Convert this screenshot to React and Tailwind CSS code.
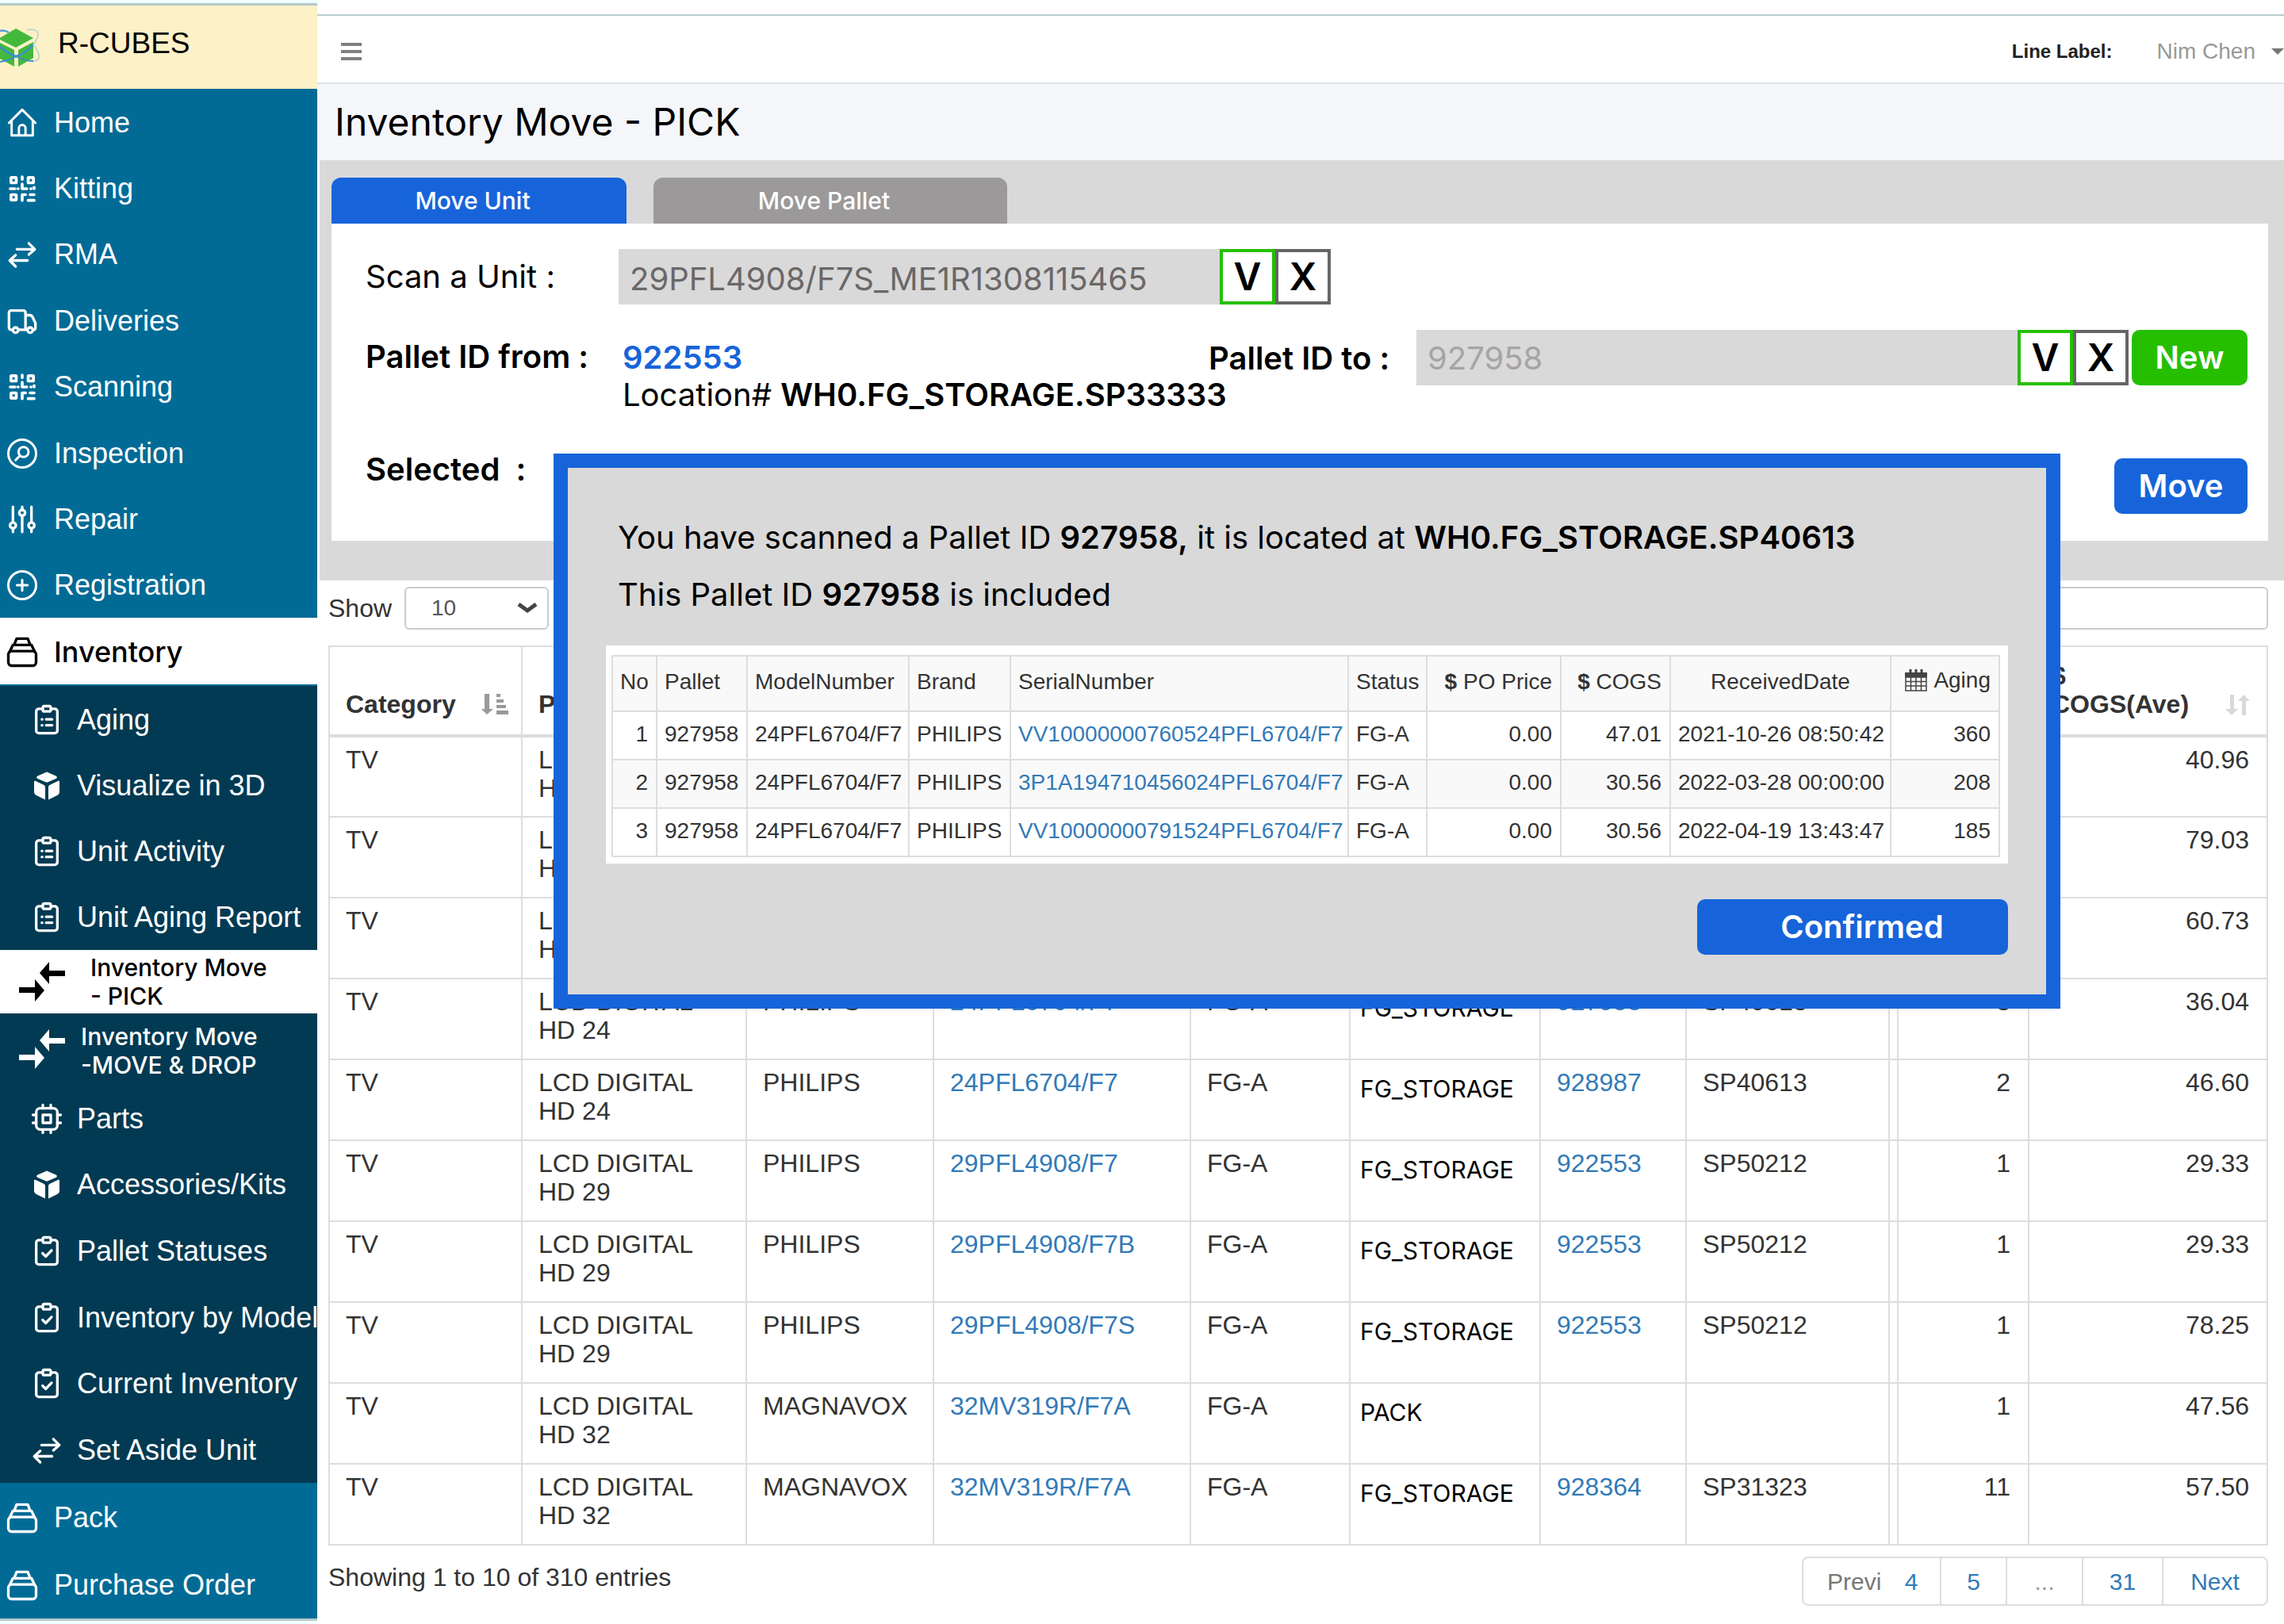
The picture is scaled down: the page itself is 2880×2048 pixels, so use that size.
import React from "react";

const SANS = "font-['Liberation_Sans',Arial,sans-serif]";
const INTER = "font-['Inter',sans-serif]";

function Svg({ children, size = "size-10", width = 2 }) {
  return (
    <svg
      viewBox="0 0 24 24"
      className={size}
      fill="none"
      stroke="currentColor"
      strokeWidth={width}
      strokeLinecap="round"
      strokeLinejoin="round"
      aria-hidden="true"
    >
      {children}
    </svg>
  );
}

const icons = {
  home: (
    <Svg width={1.8}>
      <path d="M2 12 12 2l10 10M4 10.500v11h16v-11M9.500 21.500v-5.500a2.500 2.500 0 0 1 5 0v5.500" />
    </Svg>
  ),
  qr: (
    <Svg width={2.2}>
      <rect x="3.500" y="3.500" width="4" height="4" rx="0.500" />
      <rect x="16.500" y="3.500" width="4" height="4" rx="0.500" />
      <rect x="3.500" y="16.500" width="4" height="4" rx="0.500" />
      <path d="M12 3v2M3 12h3.500M8.800 12h.2M12 8.500V12h3.500M18.500 12h.2M21 11v1M12 20.800v-4.300h2.500M18 16.500h3M16.500 20.800h4.500" />
    </Svg>
  ),
  transfer: (
    <Svg width={2}>
      <path d="M8 8h13M17 3.500 21.500 8 17 12M16 16.500H3M7 12.500 2.500 16.500 7 21" />
    </Svg>
  ),
  truck: (
    <Svg width={2}>
      <path d="M5 18.500H3.500A1.500 1.500 0 0 1 2 17V5.500A1.500 1.500 0 0 1 3.500 4H13a1.500 1.500 0 0 1 1.500 1.500V18.500H9.500M14.500 7.500h3.200c1 0 1.700.5 2.200 1.500l2.100 4.500v3.500a1.500 1.500 0 0 1-1 1.500" />
      <circle cx="7" cy="18.800" r="2" />
      <circle cx="18" cy="18.800" r="2" />
    </Svg>
  ),
  inspect: (
    <Svg width={1.8}>
      <circle cx="12" cy="12" r="10.500" />
      <circle cx="13" cy="10.800" r="3.800" />
      <path d="m10.200 13.600-3.200 3.400" />
    </Svg>
  ),
  sliders: (
    <Svg width={2}>
      <path d="M5 2.500V14M5 19v2.500M12 2.500v2M12 9v12.500M19 2.500V14M19 19v2.500" />
      <circle cx="5" cy="16.500" r="2.200" />
      <circle cx="12" cy="7" r="2.200" />
      <circle cx="19" cy="16.500" r="2.200" />
    </Svg>
  ),
  plus: (
    <Svg width={1.8}>
      <circle cx="12" cy="12" r="10.500" />
      <path d="M12 8v8M8 12h8" />
    </Svg>
  ),
  stack: (
    <Svg width={2}>
      <rect x="1.500" y="11.500" width="21" height="11" rx="2.500" />
      <path d="M2.500 12 5 6.800h14l2.500 5.200M6 6.500l1.800-4.500h8.400L18 6.500" />
    </Svg>
  ),
  clipboard: (
    <Svg width={2}>
      <path d="M8.500 3.500H6a2 2 0 0 0-2 2V20a2 2 0 0 0 2 2h12a2 2 0 0 0 2-2V5.500a2 2 0 0 0-2-2h-2.500" />
      <rect x="9" y="1.500" width="6" height="4" rx="1.200" />
      <path d="M8.300 11.500h.2M11.500 11.500h4.500M8.300 16h.2M11.500 16h4.500" />
    </Svg>
  ),
  clipcheck: (
    <Svg width={2}>
      <path d="M8.500 3.500H6a2 2 0 0 0-2 2V20a2 2 0 0 0 2 2h12a2 2 0 0 0 2-2V5.500a2 2 0 0 0-2-2h-2.500" />
      <rect x="9" y="1.500" width="6" height="4" rx="1.200" />
      <path d="m8.800 13.500 2.400 2.400 4.400-4.600" />
    </Svg>
  ),
  cube: (
    <svg viewBox="0 0 24 24" className="size-10" fill="currentColor" aria-hidden="true">
      <path d="M12 1.500 19.200 4.600c.7.400.7 1.400 0 1.800L12.900 9.200a2.200 2.200 0 0 1-1.800 0L4.800 6.400c-.7-.4-.7-1.400 0-1.800z" />
      <path d="M3.300 8.300 9.600 11.200c.7.300 1.200 1 1.200 1.800v9.500l-7-3.500a2.300 2.300 0 0 1-1.400-2V9c0-.7.400-1 .9-.7z" />
      <path d="M20.700 8.300 14.400 11.200c-.7.300-1.200 1-1.200 1.800v9.500l7-3.500a2.300 2.300 0 0 0 1.400-2V9c0-.7-.4-1-.9-.7z" />
    </svg>
  ),
  chip: (
    <Svg width={2}>
      <rect x="4" y="4" width="16" height="16" rx="3" />
      <rect x="9" y="9" width="6" height="6" />
      <path d="M9 1.500V4M15 1.500V4M9 20v2.500M15 20v2.500M1.500 9H4M1.500 15H4M20 9h2.500M20 15h2.500" />
    </Svg>
  ),
};

function MoveIcon() {
  return (
    <svg viewBox="0 0 58 50" className="h-[50px] w-[58px] shrink-0" fill="currentColor" aria-hidden="true">
      <path d="M26 14 38 0v11h20v7H38v10zM32 36 20 22v10H0v7h20v11z" />
    </svg>
  );
}

function NavItem({ icon, label, sub, active }) {
  return (
    <a
      href="#"
      className={
        "flex min-h-20 items-center whitespace-nowrap pt-0.5 text-4xl " +
        (sub ? "gap-[18px] pl-[39px] " : "gap-5 pl-2 ") +
        (active ? "bg-white font-['Inter',sans-serif] font-medium text-black" : "text-white")
      }
    >
      <span className="shrink-0">{icons[icon]}</span>
      {label}
    </a>
  );
}

const topNav = [
  ["home", "Home"],
  ["qr", "Kitting"],
  ["transfer", "RMA"],
  ["truck", "Deliveries"],
  ["qr", "Scanning"],
  ["inspect", "Inspection"],
  ["sliders", "Repair"],
  ["plus", "Registration"],
];
const subNavA = [
  ["clipboard", "Aging"],
  ["cube", "Visualize in 3D"],
  ["clipboard", "Unit Activity"],
  ["clipboard", "Unit Aging Report"],
];
const subNavB = [
  ["chip", "Parts"],
  ["cube", "Accessories/Kits"],
  ["clipcheck", "Pallet Statuses"],
  ["clipcheck", "Inventory by Model"],
  ["clipcheck", "Current Inventory"],
  ["transfer", "Set Aside Unit"],
];

function Logo() {
  return (
    <svg viewBox="0 0 52 52" className="size-[52px]" aria-hidden="true">
      <path d="M20 1 42 13 20 25-2 14z" fill="#43b93c" />
      <path d="M-2 18 18 28v21L-2 38zM42 18 23 28v21l19-11z" fill="#43b93c" />
      <path d="M0 24c8 7 14 10 20 12 8-2 16-8 22-15" fill="none" stroke="#3c8ccf" strokeWidth="2.500" />
      <path d="M20 36c7 4 14 6 22 6M20 36C14 40 6 42 0 43" fill="none" stroke="#3c8ccf" strokeWidth="2" />
      <path d="M0 4c4-1 8 0 11 2" fill="none" stroke="#5a9bd6" strokeWidth="2.500" />
      <path d="M34 3c8-2 14 0 14 5 0 4-2 8-6 13 5 6 8 12 7 17-1 3-4 4-7 4" fill="none" stroke="#b5cfcf" strokeWidth="1.500" />
    </svg>
  );
}

function Sidebar() {
  return (
    <aside className={"flex w-[400px] shrink-0 flex-col overflow-hidden bg-[#016b96] " + SANS}>
      <div className="h-1 bg-[#f0ffff]" />
      <div className="flex h-[108px] items-start gap-[21px] border-t-[3px] border-[#b5c9ca] bg-[#fdf1c7] pt-7">
        <Logo />
        <span className="text-[37px] leading-10 text-black">R-CUBES</span>
      </div>
      <nav>
        <div className="grid h-[667px] auto-rows-fr">
          {topNav.map(([i, l]) => (
            <NavItem key={l} icon={i} label={l} />
          ))}
        </div>
        <div className="grid h-[84px]">
          <NavItem icon="stack" label="Inventory" active />
        </div>
        <div className="grid h-[335px] auto-rows-fr border-t-2 border-[#016b96] bg-[#023a53]">
          {subNavA.map(([i, l]) => (
            <NavItem key={l} icon={i} label={l} sub />
          ))}
        </div>
        <a href="#" className={"flex h-20 items-center gap-8 bg-white pl-6 text-[30px] font-medium leading-9 text-black " + INTER}>
          <MoveIcon />
          <span>
            Inventory Move
            <br />- PICK
          </span>
        </a>
        <a href="#" className={"flex h-[90px] items-center gap-5 bg-[#023a53] pl-6 text-[30px] font-medium leading-9 text-white " + INTER}>
          <MoveIcon />
          <span className="pt-1">
            Inventory Move
            <br />
            -MOVE &amp; DROP
          </span>
        </a>
        <div className="grid h-[502px] auto-rows-fr bg-[#023a53]">
          {subNavB.map(([i, l]) => (
            <NavItem key={l} icon={i} label={l} sub />
          ))}
        </div>
        <div className="grid h-[171px] auto-rows-fr">
          <NavItem icon="stack" label="Pack" />
          <NavItem icon="stack" label="Purchase Order" />
        </div>
      </nav>
      <div className="flex-1 border-t-[3px] border-[#b5c9ca] bg-[#f0ffff]" />
    </aside>
  );
}

function TopBar() {
  return (
    <header className={"mt-[18px] flex h-[88px] items-center border-y-2 border-t-[#b8cdce] border-b-[#dfe3e7] pt-1.5 pl-[30px] " + SANS}>
      <button type="button" aria-label="Toggle menu" className="flex w-[26px] flex-col gap-[5px]">
        <span className="h-1 bg-[#808080]" />
        <span className="h-1 bg-[#808080]" />
        <span className="h-1 bg-[#808080]" />
      </button>
      <span className="ml-auto text-2xl font-bold text-[#222]">Line Label:</span>
      <button type="button" className="ml-14 flex items-center gap-5 text-[28px] text-[#999]">
        Nim Chen
        <svg viewBox="0 0 16 8" className="h-2 w-4" fill="#777" aria-hidden="true">
          <path d="M0 0h16L8 8z" />
        </svg>
      </button>
    </header>
  );
}

function Check({ kind }) {
  return (
    <button
      type="button"
      className={
        "flex size-[70px] shrink-0 items-center justify-center border-4 bg-white text-5xl font-semibold text-black " +
        (kind === "V" ? "border-[#26bf00]" : "border-[#666]")
      }
    >
      {kind}
    </button>
  );
}

function MovePanel() {
  return (
    <section className={"ml-[3px] bg-[#d9d9d9] pt-[22px] pr-5 pb-[50px] pl-[15px] " + INTER}>
      <div className="flex gap-[34px] text-[30px] font-medium text-white">
        <button type="button" className="h-[58px] w-[372px] rounded-t-xl bg-[#1764da] pr-4">Move Unit</button>
        <button type="button" className="h-[58px] w-[446px] rounded-t-xl bg-[#9b9999] pr-4">Move Pallet</button>
      </div>
      <div className="flex h-[400px] flex-col bg-white pt-8 pr-[26px] pl-[43px] text-[40px] leading-[48px] text-black">
        <div className="flex items-center">
          <label htmlFor="unit" className="w-[319px]">Scan a Unit :</label>
          <input id="unit" defaultValue="29PFL4908/F7S_ME1R1308115465" className="h-[70px] w-[758px] bg-[#d9d9d9] px-3.5 pt-1 text-[#6b6767]" />
          <Check kind="V" />
          <Check kind="X" />
        </div>
        <div className="mt-8 flex items-start">
          <span className="w-[324px] pt-2.5 font-semibold">Pallet ID from :</span>
          <div className="w-[739px] whitespace-nowrap pt-3">
            <a href="#" className="block font-semibold leading-[46px] text-[#1764da]">922553</a>
            Location# <span className="font-semibold">WH0.FG_STORAGE.SP33333</span>
          </div>
          <label htmlFor="pallet" className="w-[262px] shrink-0 pt-3 font-semibold">Pallet ID to :</label>
          <input id="pallet" defaultValue="927958" className="h-[70px] min-w-0 flex-1 bg-[#d9d9d9] px-3.5 text-[#a6a4a4]" />
          <Check kind="V" />
          <Check kind="X" />
          <button type="button" className="ml-1 h-[70px] w-[146px] shrink-0 rounded-[10px] bg-[#26bf00] font-semibold text-white">New</button>
        </div>
        <div className="mt-14 flex items-start justify-between">
          <span className="whitespace-pre font-semibold leading-7">Selected  :</span>
          <button type="button" className="h-[70px] w-[168px] rounded-[10px] bg-[#1764da] font-semibold text-white">Move</button>
        </div>
      </div>
    </section>
  );
}

const P = "PHILIPS";
const FG = "FG_STORAGE";
const A = "FG-A";
const rows = [
  ["", "", "", "", "", "", "", "", "40.96"],
  ["", "", "", "", "", "", "", "", "79.03"],
  ["", "", "", "", "", "", "", "", "60.73"],
  ["24", P, "24PFL6704/F7", A, FG, "927958", "SP40613", 3, "36.04"],
  ["24", P, "24PFL6704/F7", A, FG, "928987", "SP40613", 2, "46.60"],
  ["29", P, "29PFL4908/F7", A, FG, "922553", "SP50212", 1, "29.33"],
  ["29", P, "29PFL4908/F7B", A, FG, "922553", "SP50212", 1, "29.33"],
  ["29", P, "29PFL4908/F7S", A, FG, "922553", "SP50212", 1, "78.25"],
  ["32", "MAGNAVOX", "32MV319R/F7A", A, "PACK", "", "", 1, "47.56"],
  ["32", "MAGNAVOX", "32MV319R/F7A", A, FG, "928364", "SP31323", 11, "57.50"],
];

const cell = "border-2 border-[#ddd] pt-2.5 pl-5";
const num = "border-2 border-[#ddd] pt-2.5 pr-[22px] text-right";
const head = "border-2 border-b-4 border-[#ddd] pb-5 pl-5 text-left align-bottom";

function StockTable() {
  return (
    <table className="w-full table-fixed border-collapse text-[32px] leading-9 text-[#333]">
      <colgroup>
        <col className="w-[243px]" />
        <col className="w-[283px]" />
        <col className="w-[236px]" />
        <col className="w-[324px]" />
        <col className="w-[201px]" />
        <col className="w-[240px]" />
        <col className="w-[184px]" />
        <col className="w-[256px]" />
        <col className="w-[11px]" />
        <col className="w-[165px]" />
        <col />
      </colgroup>
      <thead>
        <tr className="h-[113px]">
          <th className={head}>
            <span className="flex items-center justify-between pr-4">
              Category
              <svg viewBox="0 0 34 26" className="h-[26px] w-[34px]" fill="#999" aria-hidden="true">
                <path d="M4 0h6v19h5l-8 7-7-7h4zM19 0h5v4h-5zM19 7h9v4h-9zM19 14h12v4H19zM19 21h15v5H19z" />
              </svg>
            </span>
          </th>
          <th className={head}>P</th>
          <th className={head}></th>
          <th className={head}></th>
          <th className={head}></th>
          <th className={head}></th>
          <th className={head}></th>
          <th className={head}></th>
          <th className={head}></th>
          <th className={head}></th>
          <th className="border-2 border-b-4 border-[#ddd] pb-5 pl-7 text-left align-bottom">
            <span className="flex items-end justify-between pr-5">
              <span>
                $<br />
                COGS(Ave)
              </span>
              <svg viewBox="0 0 32 26" className="mb-1 h-[26px] w-8" fill="#d9d9d9" aria-hidden="true">
                <path d="M6 0h5v18h5l-8 8-8-8h6zM21 26h5V8h5l-8-8-7 8h5z" />
              </svg>
            </span>
          </th>
        </tr>
      </thead>
      <tbody>
        {rows.map((r, i) => (
          <tr key={i} className="h-[102px] align-top">
            <td className={cell}>TV</td>
            <td className={cell}>
              {r[0] ? "LCD DIGITAL" : "L"}
              <br />
              {r[0] ? "HD " + r[0] : "H"}
            </td>
            <td className={cell}>{r[1]}</td>
            <td className={cell}>
              <a href="#" className="text-[#337ab7]">{r[2]}</a>
            </td>
            <td className={cell}>{r[3]}</td>
            <td className={"border-2 border-[#ddd] pt-[18px] pl-3 text-[30px] text-black " + INTER}>{r[4]}</td>
            <td className={cell}>
              <a href="#" className="text-[#337ab7]">{r[5]}</a>
            </td>
            <td className={cell}>{r[6]}</td>
            <td className="border-2 border-[#ddd]"></td>
            <td className={num}>{r[7]}</td>
            <td className={num}>{r[8]}</td>
          </tr>
        ))}
      </tbody>
    </table>
  );
}

const page = "h-full border-l-2 border-[#ddd] text-[#337ab7]";

function Stock() {
  return (
    <section className={"pt-2 pr-5 pl-[14px] text-[32px] text-[#333] " + SANS}>
      <div className="flex h-[54px] items-center justify-between">
        <label className="flex items-center gap-4">
          Show
          <span className="relative flex">
            <select className="h-[54px] w-[182px] appearance-none rounded-md border-2 border-[#ccc] bg-white pl-8 text-[28px] text-[#555]">
              <option>10</option>
            </select>
            <svg viewBox="0 0 26 14" className="pointer-events-none absolute top-5 right-3.5 h-3.5 w-[26px]" fill="none" stroke="#444" strokeWidth="5" aria-hidden="true">
              <path d="m2 2 11 8 11-8" />
            </svg>
          </span>
        </label>
        <input aria-label="Search" className="h-[54px] w-[440px] rounded-md border-2 border-[#ccc] px-4" />
      </div>
      <div className="mt-5">
        <StockTable />
      </div>
      <div className="mt-3.5 flex items-start justify-between">
        <span className="pt-0.5">Showing 1 to 10 of 310 entries</span>
        <div className="flex h-[62px] overflow-hidden rounded-lg border-2 border-[#ddd] text-[30px]">
          <button type="button" className="w-[120px] pl-[30px] text-left text-[#777]">Previ</button>
          <button type="button" className="w-[52px] pr-5 text-[#337ab7]">4</button>
          <button type="button" className={page + " w-[83px]"}>5</button>
          <span className="flex w-[96px] items-center justify-center border-l-2 border-[#ddd] text-[#999]">...</span>
          <button type="button" className={page + " w-[101px]"}>31</button>
          <button type="button" className={page + " w-[132px]"}>Next</button>
        </div>
      </div>
    </section>
  );
}

const scanned = [
  [1, "VV10000000760524PFL6704/F7", "47.01", "2021-10-26 08:50:42", 360],
  [2, "3P1A194710456024PFL6704/F7", "30.56", "2022-03-28 00:00:00", 208],
  [3, "VV10000000791524PFL6704/F7", "30.56", "2022-04-19 13:43:47", 185],
];
const mc = "border-2 border-[#ddd] pb-1 pl-[9px] text-left font-normal whitespace-nowrap";
const mr = "border-2 border-[#ddd] pr-2.5 pb-1 text-right font-normal whitespace-nowrap";

function ScanDialog() {
  return (
    <div
      role="dialog"
      aria-label="Scanned pallet"
      className={"absolute top-[572px] right-[282px] left-[298px] h-[700px] border-[18px] border-[#1764da] bg-[#d9d9d9] pt-16 pr-12 pl-12 text-[40px] leading-[48px] text-black " + INTER}
    >
      <p className="pl-[15px]">
        You have scanned a Pallet ID <b className="font-semibold">927958,</b> it is located at <b className="font-semibold">WH0.FG_STORAGE.SP40613</b>
      </p>
      <p className="mt-6 pl-[15px]">
        This Pallet ID <b className="font-semibold">927958</b> is included
      </p>
      <div className={"mt-10 bg-white pt-3 pr-2.5 pb-2 pl-[7px] text-[28px] leading-8 text-[#333] " + SANS}>
        <table className="w-full table-fixed border-collapse">
          <colgroup>
            <col className="w-[56px]" />
            <col className="w-[114px]" />
            <col className="w-[204px]" />
            <col className="w-[128px]" />
            <col className="w-[426px]" />
            <col className="w-[99px]" />
            <col className="w-[169px]" />
            <col className="w-[138px]" />
            <col className="w-[278px]" />
            <col />
          </colgroup>
          <thead>
            <tr className="h-[70px] bg-[#f9f9f9]">
              <th className={mc}>No</th>
              <th className={mc}>Pallet</th>
              <th className={mc}>ModelNumber</th>
              <th className={mc}>Brand</th>
              <th className={mc}>SerialNumber</th>
              <th className={mc}>Status</th>
              <th className={mr}><b>$</b> PO Price</th>
              <th className={mr}><b>$</b> COGS</th>
              <th className="border-2 border-[#ddd] pb-1 font-normal">ReceivedDate</th>
              <th className={mr}>
                <span className="inline-flex items-center gap-2">
                  <svg viewBox="0 0 28 28" className="size-7" fill="none" stroke="#444" strokeWidth="2" aria-hidden="true">
                    <path d="M1 10h26v17H1zM1 15.500h26M1 21h26M7.500 10v17M14 10v17M20.500 10v17" strokeWidth="1.500" />
                    <path d="M0 4h28v6H0z" fill="#444" stroke="none" />
                    <path d="M7 0v7M14 0v7M21 0v7" strokeWidth="3" />
                  </svg>
                  Aging
                </span>
              </th>
            </tr>
          </thead>
          <tbody>
            {scanned.map((s) => (
              <tr key={s[0]} className="h-[61px] even:bg-[#f9f9f9]">
                <td className={mr}>{s[0]}</td>
                <td className={mc}>927958</td>
                <td className={mc}>24PFL6704/F7</td>
                <td className={mc}>PHILIPS</td>
                <td className={mc}>
                  <a href="#" className="text-[#337ab7]">{s[1]}</a>
                </td>
                <td className={mc}>FG-A</td>
                <td className={mr}>0.00</td>
                <td className={mr}>{s[2]}</td>
                <td className={mc}>{s[3]}</td>
                <td className={mr}>{s[4]}</td>
              </tr>
            ))}
          </tbody>
        </table>
      </div>
      <div className="mt-[45px] flex justify-end">
        <button type="button" className="h-[70px] w-[392px] rounded-[10px] bg-[#1764da] pl-6 font-semibold text-white">Confirmed</button>
      </div>
    </div>
  );
}

export default function App() {
  return (
    <div className="flex min-h-screen bg-white">
      <Sidebar />
      <main className="relative min-w-0 flex-1">
        <TopBar />
        <h1 className={"flex h-24 items-center bg-[#f4f6fa] pl-[22px] text-5xl text-black " + INTER}>Inventory Move - PICK</h1>
        <MovePanel />
        <Stock />
        <ScanDialog />
      </main>
    </div>
  );
}
